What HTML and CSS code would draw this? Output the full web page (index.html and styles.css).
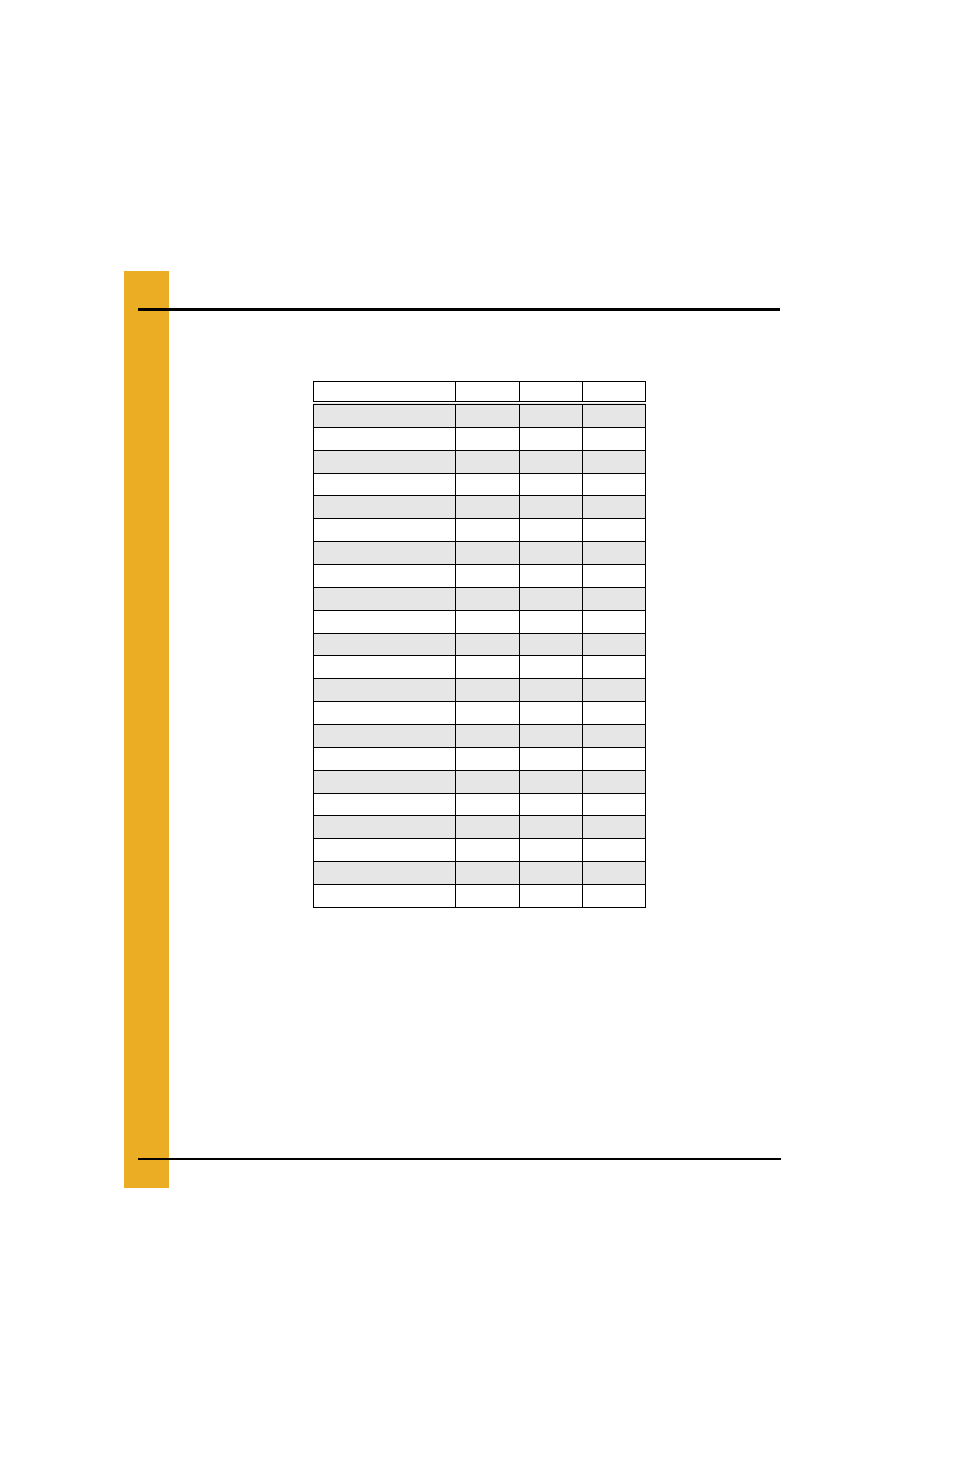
FILE: index.html
```html
<!DOCTYPE html>
<html>
<head>
<meta charset="utf-8">
<link rel="stylesheet" href="styles.css">
</head>
<body>
<div class="page">
  <div class="rule-top"></div>
  <table class="grid">
    <thead>
      <tr><th class="c1"></th><th class="c2"></th><th class="c3"></th><th class="c4"></th></tr>
    </thead>
    <tbody>
      <tr class="shade"><td></td><td></td><td></td><td></td></tr>
      <tr><td></td><td></td><td></td><td></td></tr>
      <tr class="shade"><td></td><td></td><td></td><td></td></tr>
      <tr><td></td><td></td><td></td><td></td></tr>
      <tr class="shade"><td></td><td></td><td></td><td></td></tr>
      <tr><td></td><td></td><td></td><td></td></tr>
      <tr class="shade"><td></td><td></td><td></td><td></td></tr>
      <tr><td></td><td></td><td></td><td></td></tr>
      <tr class="shade"><td></td><td></td><td></td><td></td></tr>
      <tr><td></td><td></td><td></td><td></td></tr>
      <tr class="shade"><td></td><td></td><td></td><td></td></tr>
      <tr><td></td><td></td><td></td><td></td></tr>
      <tr class="shade"><td></td><td></td><td></td><td></td></tr>
      <tr><td></td><td></td><td></td><td></td></tr>
      <tr class="shade"><td></td><td></td><td></td><td></td></tr>
      <tr><td></td><td></td><td></td><td></td></tr>
      <tr class="shade"><td></td><td></td><td></td><td></td></tr>
      <tr><td></td><td></td><td></td><td></td></tr>
      <tr class="shade"><td></td><td></td><td></td><td></td></tr>
      <tr><td></td><td></td><td></td><td></td></tr>
      <tr class="shade"><td></td><td></td><td></td><td></td></tr>
      <tr><td></td><td></td><td></td><td></td></tr>
    </tbody>
  </table>
  <div class="rule-bottom"></div>
</div>
</body>
</html>
```

FILE: styles.css
```css
html, body {
  margin: 0;
  padding: 0;
  background: #ffffff;
  font-family: "Liberation Sans", Arial, sans-serif;
}

.page {
  margin: 271px 0 0 124px;
  width: 657px;
  height: 917px;
  box-sizing: border-box;
  padding-top: 37px;
  padding-bottom: 28px;
  display: flex;
  flex-direction: column;
  background: linear-gradient(to right, #ebad23 0, #ebad23 45px, transparent 45px);
}

.rule-top {
  margin-left: 14px;
  width: 642px;
  height: 3px;
  background: #000;
  flex: none;
}

.rule-bottom {
  margin-top: auto;
  margin-left: 14px;
  width: 643px;
  height: 2px;
  background: #000;
  flex: none;
}

.grid {
  margin-top: 70px;
  margin-left: 189px;
  border-collapse: collapse;
  table-layout: fixed;
  width: 329px;
  flex: none;
}

.grid th, .grid td {
  border: 1px solid #000;
  padding: 0;
}

.grid th {
  height: 19px;
  border-bottom: 4px double #000;
}

.grid td {
  height: 21.86px;
}

.grid .c1 { width: 141px; }
.grid .c2 { width: 63px; }
.grid .c3 { width: 62px; }
.grid .c4 { width: 62px; }

.grid tr.shade td {
  background: #e6e6e6;
}
```
